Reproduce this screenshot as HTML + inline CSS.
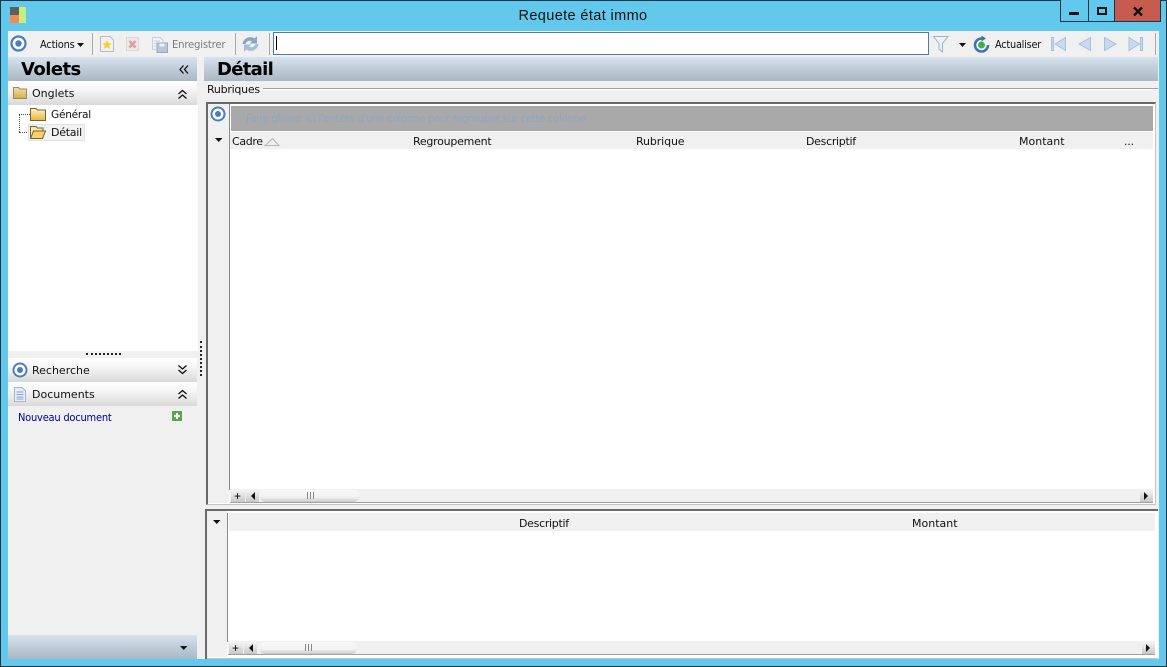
<!DOCTYPE html>
<html lang="fr"><head><meta charset="utf-8"><title>Requete état immo</title>
<style>
html,body{margin:0;padding:0;width:1167px;height:667px;overflow:hidden;background:#62c9ec}
*{box-sizing:border-box}
.a,.t{position:absolute}
.t{font-family:"DejaVu Sans","Liberation Sans",sans-serif;font-size:11px;line-height:14px;white-space:nowrap;color:#111;letter-spacing:-.25px;transform-origin:0 50%}
svg{position:absolute;overflow:visible}
.hd{background:linear-gradient(#fff,#f6f6f6 35%,#d9d9d9)}
.blue{background:linear-gradient(#d6e2ee,#a9b7c4)}
.sb{background:linear-gradient(#f8f8f8,#f2f2f2 60%,#c9c9c9);border-radius:5px}
.btn{background:linear-gradient(#f4f4f4,#c8c8c8)}
</style></head><body>
<div class="a" style="left:0;top:0;width:1167px;height:667px;border:1px solid #17384a"></div>

<!-- title bar -->
<div class="a" style="left:10px;top:7px;width:9px;height:8px;background:#5e5e5e"></div>
<div class="a" style="left:10px;top:15px;width:9px;height:8px;background:#f28a4f"></div>
<div class="a" style="left:19px;top:7px;width:7px;height:16px;background:#c8ec7e"></div>
<div class="t" style="left:383px;width:400px;top:7px;text-align:center;font:14.5px/18px 'Liberation Sans',sans-serif;letter-spacing:.38px;color:#111">Requete état immo</div>
<div class="a" style="left:1060px;top:0;width:29px;height:22px;border:1px solid #17384a;border-top:0;background:#62c9ec"></div>
<div class="a" style="left:1088px;top:0;width:27px;height:22px;border:1px solid #17384a;border-top:0;background:#62c9ec"></div>
<div class="a" style="left:1114px;top:0;width:47px;height:22px;border:1px solid #17384a;border-top:0;background:#c75b50"></div>
<div class="a" style="left:1069px;top:12px;width:10px;height:3px;background:#111"></div>
<div class="a" style="left:1097px;top:7px;width:10px;height:8px;border:2px solid #111"></div>
<svg style="left:1133px;top:7px" width="10" height="9"><path d="M1 .5L9 8.5M9 .5L1 8.5" stroke="#111" stroke-width="2.4"/></svg>

<!-- client -->
<div class="a" style="left:8px;top:31px;width:1151px;height:628px;background:#f0f0f0"></div>

<!-- toolbar -->
<svg style="left:10px;top:35px" width="18" height="18"><circle cx="8.5" cy="8.5" r="7" fill="#fff" stroke="#4a7cc0" stroke-width="2.2"/><circle cx="8.5" cy="8.5" r="3.2" fill="#4a7cc0"/></svg>
<div class="t" style="left:40px;top:38px;transform:scaleX(.9)">Actions</div>
<svg style="left:77px;top:43px" width="8" height="4"><path d="M0 0H7L3.5 4Z" fill="#111"/></svg>
<div class="a" style="left:92px;top:33px;width:1px;height:22px;background:#a8a8a8"></div>
<svg style="left:100px;top:36px" width="15" height="16"><path d="M.5 .5H10L13.500 4V15.500H.5Z" fill="#f3f1ea" stroke="#aebdd2"/><path d="M7 4.500L8.500 7.200 11.500 7.500 9.300 9.500 10 12.800 7 11.200 4 12.800 4.700 9.500 2.500 7.500 5.500 7.200Z" fill="#f2d02f"/></svg>
<svg style="left:126px;top:37px" width="14" height="15"><rect x=".5" y=".5" width="12" height="13" fill="#eee8e8" stroke="#ddd6d6"/><path d="M3.500 4L9.500 10.500M9.500 4L3.500 10.500" stroke="#dca0a6" stroke-width="2.600"/></svg>
<svg style="left:152px;top:37px" width="16" height="16"><path d="M.5 .5H8L11 3.500V12.500H.5Z" fill="#f1f3f6" stroke="#c5cedb"/><rect x="5" y="6" width="10.500" height="9.500" fill="#b9c6d8" stroke="#9aa9bf"/><rect x="7.500" y="6.500" width="5" height="3" fill="#eef1f5"/><path d="M2 4H8M2 6.500H4M2 9H4" stroke="#c5cedb"/></svg>
<div class="t" style="left:172px;top:38px;color:#7d7d7d;transform:scaleX(.92)">Enregistrer</div>
<div class="a" style="left:235px;top:33px;width:1px;height:22px;background:#a8a8a8"></div>
<svg style="left:242px;top:36px" width="17" height="16"><path d="M.5 8C1 2.500 8 -1 12.500 2.500L15 0V7.500H7.500L10 5.500C7.500 4 4.500 5 3.500 8Z" fill="#8aa6c6"/><path d="M16.500 8C16 13.500 9 17 4.500 13.500L2 16V8.500H9.500L7 10.500C9.500 12 12.500 11 13.500 8Z" fill="#a6bdd6"/></svg>
<div class="a" style="left:269px;top:33px;width:1px;height:22px;background:#a8a8a8"></div>
<div class="a" style="left:273px;top:32px;width:656px;height:23px;background:#fff;border:1px solid #4f7ba3"></div>
<div class="a" style="left:276px;top:36px;width:1px;height:14px;background:#000"></div>
<svg style="left:933px;top:36px" width="16" height="17"><path d="M.5 .5H15L9.500 7.500V16L6 13V7.500Z" fill="#edf2f7" stroke="#9fb2c6"/></svg>
<svg style="left:959px;top:43px" width="8" height="4"><path d="M0 0H7L3.500 4Z" fill="#111"/></svg>
<svg style="left:973px;top:35px" width="17" height="18"><path d="M8.500 3.500A6.500 6.500 0 1 0 15 10" fill="#fff" stroke="#3f74b4" stroke-width="2.600"/><path d="M8.500 .5L13 3.500 8.500 6.500Z" fill="#3f74b4"/><circle cx="8.500" cy="10" r="3.500" fill="#3db241"/></svg>
<div class="t" style="left:995px;top:38px;transform:scaleX(.885)">Actualiser</div>
<svg style="left:1051px;top:37px" width="16" height="14"><rect x=".5" y=".5" width="2" height="13" fill="#c8daf0" stroke="#a8c0dc"/><path d="M14.500 .5V13.500L4 7Z" fill="#c8daf0" stroke="#a8c0dc"/></svg>
<svg style="left:1078px;top:37px" width="13" height="14"><path d="M12.500 .5V13.500L1 7Z" fill="#c8daf0" stroke="#a8c0dc"/></svg>
<svg style="left:1104px;top:37px" width="13" height="14"><path d="M.5 .5V13.500L12 7Z" fill="#c8daf0" stroke="#a8c0dc"/></svg>
<svg style="left:1128px;top:37px" width="16" height="14"><path d="M1 .5V13.500L11.500 7Z" fill="#c8daf0" stroke="#a8c0dc"/><rect x="12.500" y=".5" width="2" height="13" fill="#c8daf0" stroke="#a8c0dc"/></svg>
<div class="a" style="left:1155px;top:33px;width:1px;height:22px;background:#a8a8a8"></div>

<!-- left panel -->
<div class="a blue" style="left:8px;top:57px;width:189px;height:24px"></div>
<div class="t" style="left:21px;top:59px;font:bold 18px/21px 'DejaVu Sans',sans-serif;letter-spacing:-.55px;color:#000">Volets</div>
<svg style="left:179px;top:65px" width="10" height="9"><path d="M4.500 .5L1 4.500 4.500 8.500M9 .5L5.500 4.500 9 8.500" fill="none" stroke="#111" stroke-width="1.300"/></svg>
<div class="a hd" style="left:8px;top:81px;width:189px;height:24px"></div>
<svg style="left:13px;top:86px" width="14" height="13"><path d="M.5 1.500H5.500L7 3H13.500V12.500H.5Z" fill="url(#f1)" stroke="#9a8a60"/><defs><linearGradient id="f1" x2="0" y2="1"><stop offset="0" stop-color="#f3e2ab"/><stop offset="1" stop-color="#d8a949"/></linearGradient></defs></svg>
<div class="t" style="left:32px;top:87px;letter-spacing:0">Onglets</div>
<svg style="left:178px;top:90px" width="9" height="9"><path d="M.5 4L4.500 .5 8.500 4M.5 8.500L4.500 5 8.500 8.500" fill="none" stroke="#111" stroke-width="1.300"/></svg>
<div class="a" style="left:8px;top:105px;width:190px;height:246px;background:#fff"></div>
<div class="a" style="left:19px;top:115px;height:17px;border-left:1px dotted #555"></div>
<div class="a" style="left:19px;top:114px;width:11px;border-top:1px dotted #555"></div>
<div class="a" style="left:19px;top:132px;width:10px;border-top:1px dotted #555"></div>
<svg style="left:30px;top:108px" width="16" height="13"><path d="M.5 .5H6L7.500 2H15.500V12.500H.5Z" fill="url(#f2)" stroke="#6f6439"/><defs><linearGradient id="f2" x2="0" y2="1"><stop offset="0" stop-color="#fff4c0"/><stop offset="1" stop-color="#e8b33f"/></linearGradient></defs></svg>
<div class="t" style="left:51px;top:108px;transform:scaleX(.96)">Général</div>
<div class="a" style="left:28px;top:124px;width:57px;height:17px;background:#f2f2f2;border:1px solid #e2e2e2"></div>
<svg style="left:30px;top:126px" width="16" height="13"><path d="M.5 12.500V.5H6L7.500 2H13V5" fill="#f8e6a8" stroke="#6f6439"/><path d="M.5 12.500L3.500 5H15.500L12.500 12.500Z" fill="#f6d266" stroke="#6f6439"/></svg>
<div class="t" style="left:51px;top:126px">Détail</div>

<div class="a" style="left:86px;top:353px;width:35px;border-top:2px dotted #222"></div>
<div class="a" style="left:200px;top:341px;height:35px;border-left:2px dotted #222"></div>

<div class="a hd" style="left:8px;top:358px;width:189px;height:24px"></div>
<svg style="left:12px;top:362px" width="16" height="16"><circle cx="8" cy="8" r="6.500" fill="#fff" stroke="#4a7cc0" stroke-width="2"/><circle cx="8" cy="8" r="3" fill="#4a7cc0"/></svg>
<div class="t" style="left:32px;top:364px;letter-spacing:0">Recherche</div>
<svg style="left:178px;top:365px" width="9" height="9"><path d="M.5 .5L4.500 4 8.500 .5M.5 5L4.500 8.500 8.500 5" fill="none" stroke="#111" stroke-width="1.300"/></svg>
<div class="a hd" style="left:8px;top:382px;width:189px;height:24px"></div>
<svg style="left:14px;top:387px" width="12" height="15"><path d="M.5 .5H8L11.500 4V14.500H.5Z" fill="#e6edf8" stroke="#a8b8d2"/><path d="M2.500 5H9.500M2.500 7.500H9.500M2.500 10H9.500M2.500 12H9.500" stroke="#8aa4cc"/></svg>
<div class="t" style="left:32px;top:388px;letter-spacing:0">Documents</div>
<svg style="left:178px;top:390px" width="9" height="9"><path d="M.5 4L4.500 .5 8.500 4M.5 8.500L4.500 5 8.500 8.500" fill="none" stroke="#111" stroke-width="1.300"/></svg>
<div class="t" style="left:18px;top:411px;color:#00009c;transform:scaleX(.9)">Nouveau document</div>
<svg style="left:172px;top:411px" width="11" height="11"><rect width="10" height="10" fill="#55a84c"/><path d="M5 2V8M2 5H8" stroke="#fff" stroke-width="2"/></svg>
<div class="a blue" style="left:8px;top:635px;width:189px;height:24px"></div>
<svg style="left:180px;top:646px" width="8" height="4"><path d="M0 0H7.500L3.700 4Z" fill="#111"/></svg>

<!-- right header -->
<div class="a blue" style="left:204px;top:57px;width:954px;height:24px"></div>
<div class="t" style="left:217px;top:59px;font:bold 18px/21px 'DejaVu Sans',sans-serif;letter-spacing:-.7px;color:#000">Détail</div>
<div class="t" style="left:207px;top:83px">Rubriques</div>
<div class="a" style="left:263px;top:88px;width:895px;height:2px;background:linear-gradient(#a0a0a0 50%,#fff 50%)"></div>

<!-- grid 1 -->
<div class="a" style="left:206px;top:102px;width:950px;height:403px;border:1px solid #c4c4c4;border-top:2px solid #696969;border-left:2px solid #696969;background:#fff"></div>
<div class="a" style="left:208px;top:104px;width:21px;height:399px;background:#f0f0f0"></div>
<div class="a" style="left:229px;top:104px;width:1px;height:386px;background:#8a8a8a"></div>
<svg style="left:210px;top:106px" width="16" height="16"><circle cx="8" cy="8" r="6.500" fill="#fff" stroke="#4a7cc0" stroke-width="2"/><circle cx="8" cy="8" r="3" fill="#4a7cc0"/></svg>
<svg style="left:215px;top:138px" width="8" height="4"><path d="M0 0H7.500L3.700 4Z" fill="#111"/></svg>
<div class="a" style="left:231px;top:106px;width:922px;height:25px;background:#a9a9a9"></div>
<div class="t" style="left:246px;top:112px;color:#8fa5c2;letter-spacing:-.22px;transform:scaleX(.9)">Faire glisser ici l'entête d'une colonne pour regrouper sur cette colonne</div>
<div class="a" style="left:230px;top:132px;width:923px;height:17px;background:#f0f0f0"></div>
<div class="t" style="left:232px;top:135px;letter-spacing:-.35px">Cadre</div>
<svg style="left:265px;top:138px" width="15" height="8"><path d="M0 7.500H14L7.500 .5Z" fill="none" stroke="#b5b5b5"/></svg>
<div class="t" style="left:413px;top:135px">Regroupement</div>
<div class="t" style="left:636px;top:135px;letter-spacing:-.12px">Rubrique</div>
<div class="t" style="left:806px;top:135px;letter-spacing:-.3px">Descriptif</div>
<div class="t" style="left:1019px;top:135px;letter-spacing:0">Montant</div>
<div class="t" style="left:1124px;top:135px">...</div>

<div class="a" style="left:230px;top:489px;width:923px;height:14px;background:#f0f0f0;border-bottom:1px solid #a0a0a0"></div>
<div class="a btn" style="left:231px;top:490px;width:14px;height:12px"></div>
<div class="t" style="left:234px;top:489px;color:#000;font:12px/14px 'Liberation Sans',sans-serif">+</div>
<div class="a btn" style="left:246px;top:490px;width:13px;height:12px"></div>
<svg style="left:251px;top:492px" width="5" height="8"><path d="M4 0V8L0 4Z" fill="#111"/></svg>
<div class="a sb" style="left:260px;top:490px;width:99px;height:12px"></div>
<div class="a" style="left:307px;top:492px;width:7px;height:7px;border-left:1px solid #888;border-right:1px solid #888"><div class="a" style="left:2px;top:0;width:1px;height:7px;background:#888"></div></div>
<div class="a btn" style="left:1140px;top:490px;width:13px;height:12px"></div>
<svg style="left:1144px;top:492px" width="5" height="8"><path d="M0 0V8L4 4Z" fill="#111"/></svg>

<!-- grid 2 -->
<div class="a" style="left:205px;top:509px;width:953px;height:150px;border-top:2px solid #696969;border-left:2px solid #696969;background:#fff"></div>
<div class="a" style="left:207px;top:511px;width:20px;height:146px;background:#f0f0f0"></div>
<div class="a" style="left:227px;top:513px;width:1px;height:129px;background:#8a8a8a"></div>
<svg style="left:213px;top:520px" width="8" height="4"><path d="M0 0H7.500L3.700 4Z" fill="#111"/></svg>
<div class="a" style="left:229px;top:513px;width:926px;height:18px;background:#f0f0f0"></div>
<div class="t" style="left:519px;top:517px;letter-spacing:-.3px">Descriptif</div>
<div class="t" style="left:912px;top:517px;letter-spacing:0">Montant</div>

<div class="a" style="left:228px;top:641px;width:927px;height:13px;background:#f0f0f0"></div>
<div class="a" style="left:228px;top:654px;width:927px;height:1px;background:#a0a0a0"></div>
<div class="a" style="left:207px;top:658px;width:951px;height:1px;background:#c4c4c4"></div>
<div class="a btn" style="left:229px;top:642px;width:14px;height:12px"></div>
<div class="t" style="left:232px;top:641px;color:#000;font:12px/14px 'Liberation Sans',sans-serif">+</div>
<div class="a btn" style="left:244px;top:642px;width:13px;height:12px"></div>
<svg style="left:249px;top:644px" width="5" height="8"><path d="M4 0V8L0 4Z" fill="#111"/></svg>
<div class="a sb" style="left:259px;top:642px;width:98px;height:12px"></div>
<div class="a" style="left:305px;top:644px;width:7px;height:7px;border-left:1px solid #888;border-right:1px solid #888"><div class="a" style="left:2px;top:0;width:1px;height:7px;background:#888"></div></div>
<div class="a btn" style="left:1142px;top:642px;width:13px;height:12px"></div>
<svg style="left:1146px;top:644px" width="5" height="8"><path d="M0 0V8L4 4Z" fill="#111"/></svg>
</body></html>
